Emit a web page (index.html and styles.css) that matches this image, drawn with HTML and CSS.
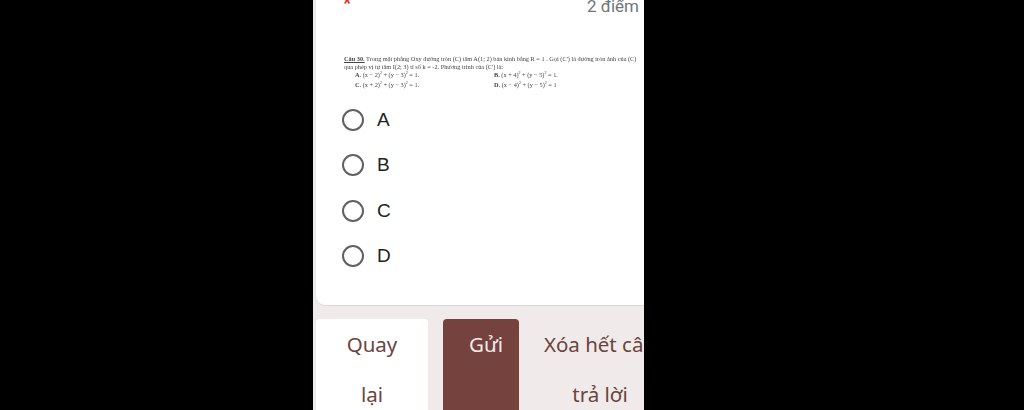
FILE: index.html
```html
<!DOCTYPE html>
<html lang="vi">
<head>
    <meta charset="UTF-8">
    <meta name="viewport" content="width=device-width, initial-scale=1.0">
    <title>Câu 30</title>
    <link rel="stylesheet" href="styles.css">
</head>
<body>
    <div class="screen">
        <div class="card">
            <div class="card-head">
                <span class="required">*</span>
                <span class="points">2 điểm</span>
            </div>
            <div class="question">
                <p class="q-line"><b class="q-num">Câu 30.</b> Trong mặt phẳng Oxy đường tròn (C) tâm A(1; 2) bán kính bằng R = 1 . Gọi (C') là đường tròn ảnh của (C)</p>
                <p class="q-line">qua phép vị tự tâm I(2; 3) tỉ số k = -2. Phương trình của (C') là:</p>
                <div class="q-answers">
                    <span><b>A.</b> (x − 2)<sup>2</sup> + (y − 3)<sup>2</sup> = 1.</span>
                    <span><b>B.</b> (x + 4)<sup>2</sup> + (y − 5)<sup>2</sup> = 1.</span>
                    <span><b>C.</b> (x + 2)<sup>2</sup> + (y − 3)<sup>2</sup> = 1.</span>
                    <span><b>D.</b> (x − 4)<sup>2</sup> + (y − 5)<sup>2</sup> = 1</span>
                </div>
            </div>
            <div class="options">
                <div class="option"><span class="radio"></span><span>A</span></div>
                <div class="option"><span class="radio"></span><span>B</span></div>
                <div class="option"><span class="radio"></span><span>C</span></div>
                <div class="option"><span class="radio"></span><span>D</span></div>
            </div>
        </div>
        <div class="actions">
            <div class="btn btn-back">Quay<br>lại</div>
            <div class="btn btn-send">Gửi</div>
            <div class="btn btn-clear">Xóa hết câu<br>trả lời</div>
        </div>
    </div>
</body>
</html>
```
FILE: styles.css
```css
html, body {
    margin: 0;
    height: 100%;
    background-color: #000;
    overflow: hidden;
}
.screen {
    width: 331px;
    height: 410px;
    margin-left: 313px;
    padding-left: 3px;
    box-sizing: border-box;
    background-color: #f0ebea;
    overflow: hidden;
    font-family: Roboto, "Liberation Sans", sans-serif;
}
.card {
    height: 305px;
    overflow: hidden;
    box-sizing: border-box;
    background-color: #fff;
    border-radius: 0 0 0 9px;
    box-shadow: 0 1px 1px #dcd8d7;
}
.card-head {
    display: flex;
    justify-content: space-between;
    height: 54px;
    margin-top: -4px;
    padding: 0 5px 0 27px;
    box-sizing: border-box;
}
.required {
    color: #d93025;
    font-size: 18px;
    font-weight: bold;
    line-height: 14px;
}
.points {
    color: #70757a;
    font-size: 17px;
    line-height: 21px;
}
.question {
    height: 51px;
    padding: 5px 0 0 28px;
    color: #444;
    font-family: "Liberation Serif", serif;
    font-size: 6.3px;
    line-height: 8px;
    filter: blur(0.3px);
}
.q-line {
    margin: 0;
    white-space: nowrap;
}
.q-num {
    text-decoration: underline;
}
.q-answers {
    display: grid;
    grid-template-columns: 139px 139px;
    margin-top: -1px;
    padding-left: 11px;
    line-height: 10px;
    white-space: nowrap;
}
.q-answers sup {
    font-size: 4px;
    line-height: 0;
}
.options {
    display: flex;
    flex-direction: column;
    gap: 23.4px;
    padding: 3px 0 0 26px;
}
.option {
    display: flex;
    align-items: center;
    gap: 13px;
    height: 22px;
    color: #222;
    font-family: "Liberation Sans", sans-serif;
    font-size: 19px;
}
.radio {
    width: 22px;
    height: 22px;
    box-sizing: border-box;
    border: 2.5px solid #616161;
    border-radius: 50%;
}
.actions {
    display: flex;
    gap: 15px;
    margin-top: 14px;
}
.btn {
    flex: none;
    height: 110px;
    box-sizing: border-box;
    border-radius: 4px 4px 0 0;
    color: #6b4340;
    font-family: "Noto Sans", sans-serif;
    font-size: 20.5px;
    line-height: 50px;
    text-align: center;
    white-space: nowrap;
}
.btn-back {
    width: 112px;
    background-color: #fff;
}
.btn-send {
    width: 76px;
    padding-left: 10px;
    background-color: #75423e;
    color: #f3eceb;
}
.btn-clear {
    width: 132px;
}
```
